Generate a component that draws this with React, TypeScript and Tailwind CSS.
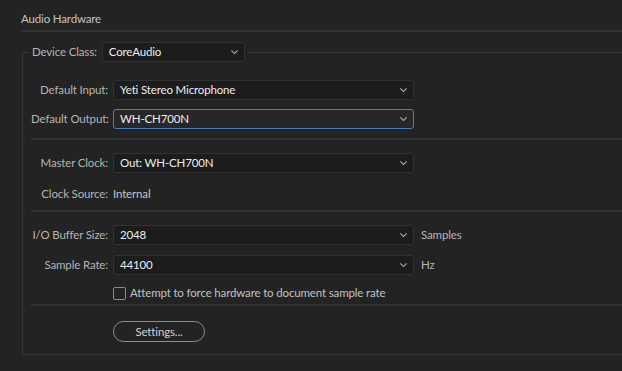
import React from "react";

function Chevron() {
  return (
    <svg width="9" height="6" viewBox="0 0 9 6" className="shrink-0">
      <path d="M1.3 1.4 L4.5 4.4 L7.7 1.4" fill="none" stroke="#a8a8a8" strokeWidth="1.1" />
    </svg>
  );
}

function Select({
  value,
  width = "w-[301px]",
  active = false,
}: {
  value: string;
  width?: string;
  active?: boolean;
}) {
  return (
    <div
      className={`${width} h-[20px] shrink-0 rounded-[3px] border flex items-center justify-between pl-[6px] pr-[5px] ${
        active ? "border-[#3f7fcc] bg-[#272727]" : "border-[#313131] bg-[#1c1c1c]"
      }`}
    >
      <span className="text-[#ececec] leading-none">{value}</span>
      <Chevron />
    </div>
  );
}

function Row({
  label,
  children,
  className = "",
}: {
  label: string;
  children: React.ReactNode;
  className?: string;
}) {
  return (
    <div className={`flex items-center h-[20px] ${className}`}>
      <div className="w-[77px] text-right text-[#b4b4b4] leading-none whitespace-nowrap">{label}</div>
      <div className="ml-[5px] flex items-center">{children}</div>
    </div>
  );
}

function Divider({ className = "" }: { className?: string }) {
  return <div className={`h-[2px] bg-[#323232] ${className}`} />;
}

export default function App() {
  return (
    <div className="w-[622px] h-[371px] overflow-hidden bg-[#232323] font-['Lato',sans-serif] text-[11.5px] tracking-[-0.15px]">
      <div className="pl-[21px] pt-[11px]">
        <div className="h-[16px] leading-[16px] text-[#c4c4c4]">Audio Hardware</div>
        <div className="mt-[3px] h-[2px] bg-[#333333]" />

        <fieldset className="ml-[1px] mt-[10px] w-[700px] border border-[#363636] rounded-[2px] pb-[12px]">
          <legend className="ml-[6px] px-[3px]">
            <div className="flex items-center h-[20px]">
              <span className="text-[#b4b4b4] leading-none mr-[5px]">Device Class:</span>
              <Select value="CoreAudio" width="w-[143px]" />
            </div>
          </legend>

          <div className="pl-[8px] pt-[18px]">
            <Row label="Default Input:">
              <Select value="Yeti Stereo Microphone" />
            </Row>
            <Row label="Default Output:" className="mt-[9px]">
              <Select value="WH-CH700N" active />
            </Row>

            <Divider className="mt-[9px]" />

            <Row label="Master Clock:" className="mt-[13px]">
              <Select value="Out: WH-CH700N" />
            </Row>
            <Row label="Clock Source:" className="mt-[11px]">
              <span className="text-[#c4c4c4] leading-none">Internal</span>
            </Row>

            <Divider className="mt-[6px]" />

            <Row label="I/O Buffer Size:" className="mt-[13px]">
              <Select value="2048" />
              <span className="ml-[7px] text-[#b4b4b4] leading-none">Samples</span>
            </Row>
            <Row label="Sample Rate:" className="mt-[10px]">
              <Select value="44100" />
              <span className="ml-[7px] text-[#b4b4b4] leading-none">Hz</span>
            </Row>

            <div className="mt-[11px] h-[14px] flex items-center pl-[82px]">
              <div className="w-[13px] h-[13px] border-[1.5px] border-[#8c8c8c] rounded-[2px]" />
              <span className="ml-[4px] text-[#c0c0c0] leading-none">
                Attempt to force hardware to document sample rate
              </span>
            </div>

            <Divider className="mt-[4px]" />

            <div className="mt-[15px] pl-[82px]">
              <button className="w-[92px] h-[21px] rounded-full border-[1.5px] border-[#8e8e8e] text-[#d0d0d0] leading-none flex items-center justify-center">
                Settings...
              </button>
            </div>
          </div>
        </fieldset>
      </div>
    </div>
  );
}
